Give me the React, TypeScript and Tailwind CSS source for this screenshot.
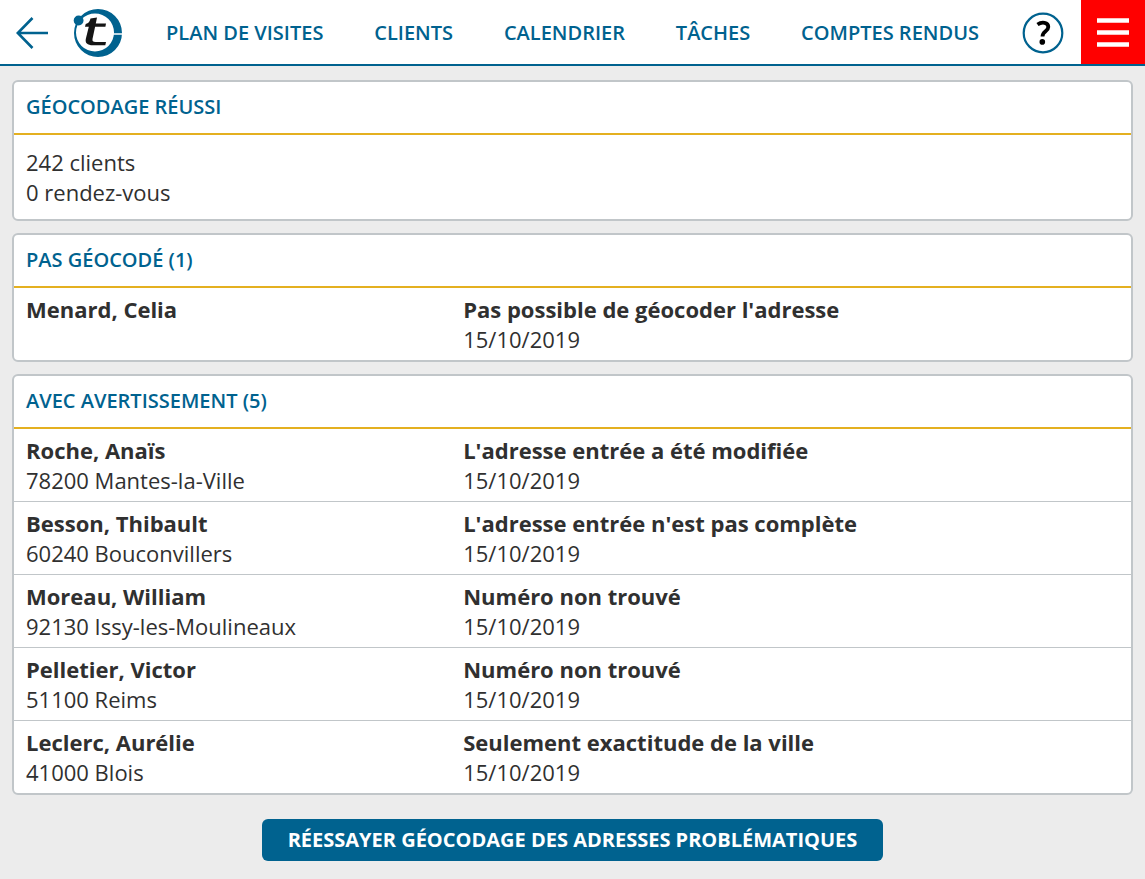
type Entry = {
  name: string;
  city?: string;
  message: string;
  date: string;
};

const navItems = ['Plan de visites', 'Clients', 'Calendrier', 'Tâches', 'Comptes rendus'];

const failed: Entry[] = [
  { name: 'Menard, Celia', message: "Pas possible de géocoder l'adresse", date: '15/10/2019' },
];

const warnings: Entry[] = [
  { name: 'Roche, Anaïs', city: '78200 Mantes-la-Ville', message: "L'adresse entrée a été modifiée", date: '15/10/2019' },
  { name: 'Besson, Thibault', city: '60240 Bouconvillers', message: "L'adresse entrée n'est pas complète", date: '15/10/2019' },
  { name: 'Moreau, William', city: '92130 Issy-les-Moulineaux', message: 'Numéro non trouvé', date: '15/10/2019' },
  { name: 'Pelletier, Victor', city: '51100 Reims', message: 'Numéro non trouvé', date: '15/10/2019' },
  { name: 'Leclerc, Aurélie', city: '41000 Blois', message: 'Seulement exactitude de la ville', date: '15/10/2019' },
];

function Logo() {
  return (
    <svg width="50" height="50" viewBox="0 0 50 50" aria-hidden="true">
      {/* Ring, thin on the left and thick on the right */}
      <path
        fillRule="evenodd"
        fill="#00628f"
        d="M25 1a24 24 0 1 1 0 48a24 24 0 1 1 0-48zM22 5.500a19 19 0 1 0 0 38a19 19 0 1 0 0-38z"
      />
      <path d="M39 26h11" stroke="#fff" strokeWidth="1.500" />
      <circle cx="5.600" cy="12.500" r="4.900" fill="#00628f" />
      {/* Slanted t */}
      <path
        fill="#151515"
        d="M17.500 10.500L24 9.500L22.800 15.500H33L32.400 18.700H22.100L19.500 31C19.200 33.200 20 34 22.500 34H33L32.300 37.300H20C14.300 37.300 11.800 35 12.900 30.500L15.800 18.700H12L12.700 16C15.500 15.500 16.800 13.500 17.500 10.500z"
      />
    </svg>
  );
}

function Header() {
  return (
    <header className="flex h-[66px] border-b-2 border-[#00628f] bg-white text-[#00628f]">
      <div className="flex flex-1 items-center pt-[2px] pl-4">
        <button type="button" aria-label="Retour">
          <svg width="32" height="32" viewBox="0 0 32 32" fill="none" stroke="currentColor" strokeWidth="2.600">
            <path d="M32 16H2M16.500 1L1.800 16L16.500 31" />
          </svg>
        </button>
        <a href="#" aria-label="Accueil" className="ml-[25px]">
          <Logo />
        </a>
        <nav className="flex flex-1 items-center justify-between px-[43px]">
          {navItems.map((item) => (
            <a key={item} href="#" className="text-xl leading-[30px] font-semibold whitespace-nowrap uppercase">
              {item}
            </a>
          ))}
        </nav>
        <button type="button" aria-label="Aide" className="mr-[17px]">
          <svg width="42" height="42" viewBox="0 0 42 42" fill="none">
            <circle cx="21" cy="21" r="19.300" stroke="#00628f" strokeWidth="2.200" />
            <path
              d="M15.500 12.500C20 9.400 26.300 10.300 26.300 15C26.300 19.500 20.500 19.200 20.500 24.500"
              stroke="#000"
              strokeWidth="3.800"
            />
            <circle cx="20.300" cy="29.900" r="2.800" fill="#000" />
          </svg>
        </button>
      </div>
      <button type="button" aria-label="Menu" className="flex w-16 items-center justify-center bg-[#ff0000]">
        <svg width="32" height="32" viewBox="0 0 32 32" fill="none" stroke="#fff" strokeWidth="4.400">
          <path d="M0 4.500H32M0 16.500H32M0 28.500H32" />
        </svg>
      </button>
    </header>
  );
}

function Card({ title, children }: { title: string; children: React.ReactNode }) {
  return (
    <section className="rounded-md border-2 border-[#c1c6c9] bg-white">
      <h2 className="border-b-2 border-[#e4b020] px-3 pt-[10px] pb-[11px] text-xl leading-[30px] font-semibold text-[#00628f] uppercase">
        {title}
      </h2>
      {children}
    </section>
  );
}

function EntryList({ entries }: { entries: Entry[] }) {
  return (
    <ul className="divide-y divide-[#c1c6c9]">
      {entries.map((entry) => (
        <li key={entry.name} className="grid grid-cols-[2fr_3fr] px-3 py-[6px]">
          <div>
            <p className="font-bold">{entry.name}</p>
            <p>{entry.city}</p>
          </div>
          <div>
            <p className="font-bold">{entry.message}</p>
            <p>{entry.date}</p>
          </div>
        </li>
      ))}
    </ul>
  );
}

export default function App() {
  return (
    <div className="min-h-screen bg-[#ececec] font-['Open_Sans',sans-serif] text-[22px] leading-[30px] text-[#303030]">
      <Header />
      <main className="flex flex-col gap-3 px-3 pt-[14px] pb-4">
        <Card title="Géocodage réussi">
          <div className="p-3">
            <p>242 clients</p>
            <p>0 rendez-vous</p>
          </div>
        </Card>
        <Card title="Pas géocodé (1)">
          <EntryList entries={failed} />
        </Card>
        <Card title="Avec avertissement (5)">
          <EntryList entries={warnings} />
        </Card>
        <button
          type="button"
          className="mt-3 self-center rounded-md bg-[#00628f] px-[26px] py-[6px] text-xl leading-[30px] font-bold text-white uppercase"
        >
          Réessayer géocodage des adresses problématiques
        </button>
      </main>
    </div>
  );
}
